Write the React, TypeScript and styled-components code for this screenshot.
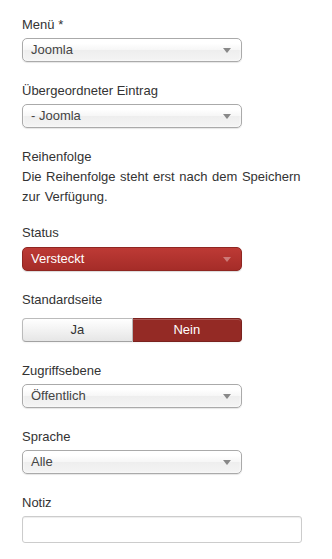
import React from "react";
import styled, { createGlobalStyle, css } from "styled-components";

const GlobalStyle = createGlobalStyle`
  html, body {
    margin: 0;
    padding: 0;
    background: #fff;
  }
  body {
    font-family: "Liberation Sans", Arial, sans-serif;
    font-size: 13px;
    line-height: 18px;
    color: #333;
  }
`;

const Form = styled.form`
  width: 280px;
  padding: 16px 0 0 22px;
  display: flex;
  flex-direction: column;
  gap: 20px;
`;

const Field = styled.div<{ $after?: number }>`
  display: flex;
  flex-direction: column;
  margin-bottom: ${(p) => p.$after ?? 0}px;
`;

const Label = styled.label<{ $gap?: number }>`
  display: block;
  line-height: 18px;
  margin-bottom: ${(p) => p.$gap ?? 5}px;
`;

const Note = styled.p`
  margin: 1px 0 0;
  line-height: 20px;
  word-spacing: 1px;
`;

const Select = styled.div<{ $tone?: "danger" }>`
  position: relative;
  box-sizing: border-box;
  width: 220px;
  height: 24px;
  padding: 0 24px 0 8px;
  display: flex;
  align-items: center;
  border: 1px solid #aaa;
  border-radius: 5px;
  background: linear-gradient(#fff 20%, #f6f6f6 50%, #eee 52%, #f4f4f4 100%);
  box-shadow: inset 0 0 3px #fff, 0 1px 1px rgba(0, 0, 0, 0.1);
  color: #444;

  ${(p) =>
    p.$tone === "danger" &&
    css`
      border-color: #8f2621;
      background: linear-gradient(#bd3a35, #a52c28);
      box-shadow: 0 1px 1px rgba(0, 0, 0, 0.15);
      color: #fff;
    `}
`;

const Caret = styled.span<{ $light?: boolean }>`
  position: absolute;
  right: 10px;
  top: 9px;
  width: 0;
  height: 0;
  border-left: 4px solid transparent;
  border-right: 4px solid transparent;
  border-top: 5px solid ${(p) => (p.$light ? "rgba(255,255,255,0.35)" : "#888")};
`;

const Toggle = styled.div`
  display: flex;
  width: 220px;
  height: 24px;
`;

const ToggleButton = styled.button<{ $active?: boolean }>`
  flex: 1;
  box-sizing: border-box;
  font: inherit;
  line-height: 18px;
  padding: 0;
  border: 1px solid #bbb;
  border-bottom-color: #a2a2a2;
  color: #333;
  background: linear-gradient(#fff, #e6e6e6);
  box-shadow: inset 0 1px 0 rgba(255, 255, 255, 0.2), 0 1px 2px rgba(0, 0, 0, 0.05);

  &:first-child {
    border-radius: 4px 0 0 4px;
  }
  &:last-child {
    border-radius: 0 4px 4px 0;
    border-left: none;
  }

  ${(p) =>
    p.$active &&
    css`
      background: #942a25;
      border-color: #7a221e;
      color: #fff;
    `}
`;

const TextInput = styled.input`
  box-sizing: border-box;
  width: 280px;
  height: 27px;
  padding: 4px 6px;
  border: 1px solid #ccc;
  border-radius: 3px;
  box-shadow: inset 0 1px 1px rgba(0, 0, 0, 0.075);
  font: inherit;
  color: #555;
  outline: none;
`;

type SelectFieldProps = {
  label: string;
  value: string;
  tone?: "danger";
};

const SelectField = ({ label, value, tone }: SelectFieldProps) => (
  <Field>
    <Label $gap={tone ? 5 : 4}>{label}</Label>
    <Select $tone={tone}>
      <span>{value}</span>
      <Caret $light={tone === "danger"} />
    </Select>
  </Field>
);

const App = () => {
  return (
    <>
      <GlobalStyle />
      <Form onSubmit={(e) => e.preventDefault()}>
        <SelectField label="Menü *" value="Joomla" />
        <SelectField label="Übergeordneter Eintrag" value="- Joomla" />

        <Field $after={-3}>
          <Label $gap={0}>Reihenfolge</Label>
          <Note>Die Reihenfolge steht erst nach dem Speichern zur Verfügung.</Note>
        </Field>

        <SelectField label="Status" value="Versteckt" tone="danger" />

        <Field>
          <Label $gap={9}>Standardseite</Label>
          <Toggle>
            <ToggleButton type="button">Ja</ToggleButton>
            <ToggleButton type="button" $active>
              Nein
            </ToggleButton>
          </Toggle>
        </Field>

        <SelectField label="Zugriffsebene" value="Öffentlich" />
        <SelectField label="Sprache" value="Alle" />

        <Field>
          <Label $gap={4}>Notiz</Label>
          <TextInput type="text" />
        </Field>
      </Form>
    </>
  );
};

export default App;
